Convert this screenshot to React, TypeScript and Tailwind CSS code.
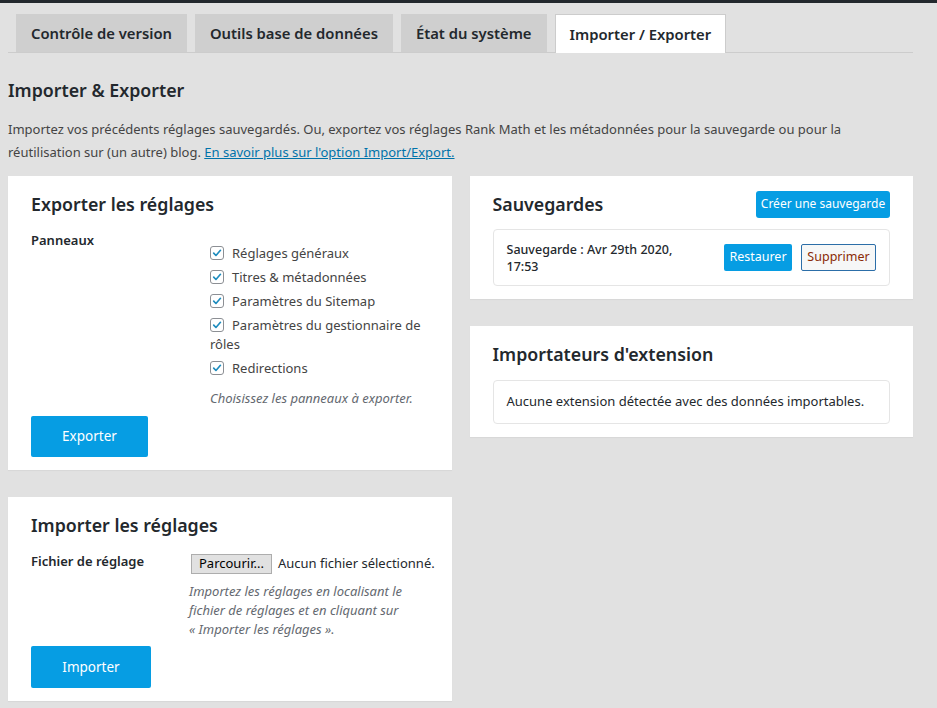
import React from "react";

const tabs = [
    { label: "Contrôle de version", active: false },
    { label: "Outils base de données", active: false },
    { label: "État du système", active: false },
    { label: "Importer / Exporter", active: true },
];

const panels: React.ReactNode[] = [
    "Réglages généraux",
    "Titres & métadonnées",
    "Paramètres du Sitemap",
    <>
        Paramètres du gestionnaire de
        <br />
        rôles
    </>,
    "Redirections",
];

const CheckIcon = () => (
    <span className="mr-[8px] inline-flex h-[14px] w-[14px] translate-y-[2px] items-center justify-center rounded-[3px] border border-[#8c8f94] bg-white align-baseline">
        <svg viewBox="0 0 16 16" className="h-[14px] w-[14px]">
            <path
                d="M3.6 8.2l3 3.1L12.6 4.4"
                fill="none"
                stroke="#1e8cbe"
                strokeWidth="2.2"
                strokeLinecap="round"
                strokeLinejoin="round"
            />
        </svg>
    </span>
);

const Card: React.FC<{ title: string; children: React.ReactNode; action?: React.ReactNode }> = ({
    title,
    children,
    action,
}) => (
    <div className="bg-white px-[23px] pt-[14px] pb-[13px] shadow-[0_1px_1px_rgba(0,0,0,0.04)]">
        <div className="flex items-center justify-between">
            <h2 className="text-[17.8px] leading-[28px] font-semibold text-[#23282d]">{title}</h2>
            {action}
        </div>
        {children}
    </div>
);

export default function App() {
    return (
        <div className="min-h-screen bg-[#e1e1e1] font-['Noto_Sans',sans-serif] text-[#444]">
            <div className="h-[3px] bg-[#23282d]" />
            <div className="pt-[11px] pr-6 pl-2">
                {/* tabs */}
                <div className="flex gap-2 border-b border-[#cccccc] pl-2">
                    {tabs.map((tab) => (
                        <div
                            key={tab.label}
                            className={
                                tab.active
                                    ? "-mb-px flex h-[39px] items-center border border-b-0 border-[#cccccc] bg-white px-[14px] text-[14.8px] font-semibold text-[#23282d]"
                                    : "flex h-[38px] items-center bg-[#cfcfcf] px-[15px] text-[14.8px] font-semibold text-[#23282d]"
                            }
                        >
                            {tab.label}
                        </div>
                    ))}
                </div>

                <h1 className="mt-[24px] text-[17.8px] leading-[26px] font-semibold text-[#23282d]">
                    Importer &amp; Exporter
                </h1>
                <p className="mt-[15px] text-[13px] leading-[23px] text-[#444]">
                    Importez vos précédents réglages sauvegardés. Ou, exportez vos réglages Rank Math et les
                    métadonnées pour la sauvegarde ou pour la
                    <br />
                    réutilisation sur (un autre) blog.{" "}
                    <a href="#" className="text-[#0073aa] underline">
                        En savoir plus sur l'option Import/Export.
                    </a>
                </p>

                <div className="mt-[12px] grid grid-cols-2 items-start gap-[18px]">
                    {/* left column */}
                    <div className="flex flex-col gap-[27px]">
                        <Card title="Exporter les réglages">
                            <div className="mt-[12px] flex">
                                <div className="w-[179px] shrink-0 text-[13px] leading-[20px] font-semibold text-[#23282d]">
                                    Panneaux
                                </div>
                                <div className="flex-1 pt-[14px]">
                                    <ul className="flex flex-col gap-[5px]">
                                        {panels.map((p, i) => (
                                            <li key={i} className="text-[13px] leading-[19px] text-[#444]">
                                                <CheckIcon />
                                                {p}
                                            </li>
                                        ))}
                                    </ul>
                                    <p className="mt-[11px] text-[13px] leading-[19px] text-[#646970] italic">
                                        Choisissez les panneaux à exporter.
                                    </p>
                                </div>
                            </div>
                            <button
                                type="button"
                                className="mt-[8px] h-[41px] w-[117px] rounded-[2px] bg-[#069de3] text-[13.5px] text-white"
                            >
                                Exporter
                            </button>
                        </Card>

                        <Card title="Importer les réglages">
                            <div className="mt-[12px] flex">
                                <div className="w-[158px] shrink-0 text-[13px] leading-[20px] font-semibold text-[#23282d]">
                                    Fichier de réglage
                                </div>
                                <div className="flex-1 pt-[3px]">
                                    <div className="flex items-center gap-[6px] text-[13px] whitespace-nowrap text-[#23282d]">
                                        <span className="ml-[2px] inline-flex h-[20px] items-center border border-[#adadad] bg-[#e1e1e1] px-[7px] text-[13px] text-black">
                                            Parcourir...
                                        </span>
                                        Aucun fichier sélectionné.
                                    </div>
                                    <p className="mt-[8px] text-[13px] leading-[19px] text-[#646970] italic">
                                        Importez les réglages en localisant le
                                        <br />
                                        fichier de réglages et en cliquant sur
                                        <br />« Importer les réglages ».
                                    </p>
                                </div>
                            </div>
                            <button
                                type="button"
                                className="mt-[7px] h-[42px] w-[120px] rounded-[2px] bg-[#069de3] text-[13.5px] text-white"
                            >
                                Importer
                            </button>
                        </Card>
                    </div>

                    {/* right column */}
                    <div className="flex flex-col gap-[27px]">
                        <Card
                            title="Sauvegardes"
                            action={
                                <button
                                    type="button"
                                    className="h-[27px] w-[134px] rounded-[3px] bg-[#069de3] text-[12px] text-white"
                                >
                                    Créer une sauvegarde
                                </button>
                            }
                        >
                            <div className="mt-[11px] flex items-center justify-between rounded-[4px] border border-[#e5e5e5] py-[10.5px] pr-[13px] pl-[13px]">
                                <div className="text-[12.5px] leading-[17px] font-medium text-[#23282d]">
                                    Sauvegarde : Avr 29th 2020,
                                    <br />
                                    17:53
                                </div>
                                <div className="flex gap-[9px]">
                                    <button
                                        type="button"
                                        className="h-[27px] w-[68px] rounded-[2px] bg-[#069de3] text-[12.5px] text-white"
                                    >
                                        Restaurer
                                    </button>
                                    <button
                                        type="button"
                                        className="h-[27px] w-[75px] rounded-[2px] border border-[#2c6ea8] bg-[#f6f7f7] text-[12.5px] text-[#8a2b06]"
                                    >
                                        Supprimer
                                    </button>
                                </div>
                            </div>
                        </Card>

                        <Card title="Importateurs d'extension">
                            <div className="mt-[12px] flex h-[44px] items-center rounded-[4px] border border-[#e5e5e5] px-[13px] text-[13px] text-[#23282d]">
                                Aucune extension détectée avec des données importables.
                            </div>
                        </Card>
                    </div>
                </div>
            </div>
        </div>
    );
}
